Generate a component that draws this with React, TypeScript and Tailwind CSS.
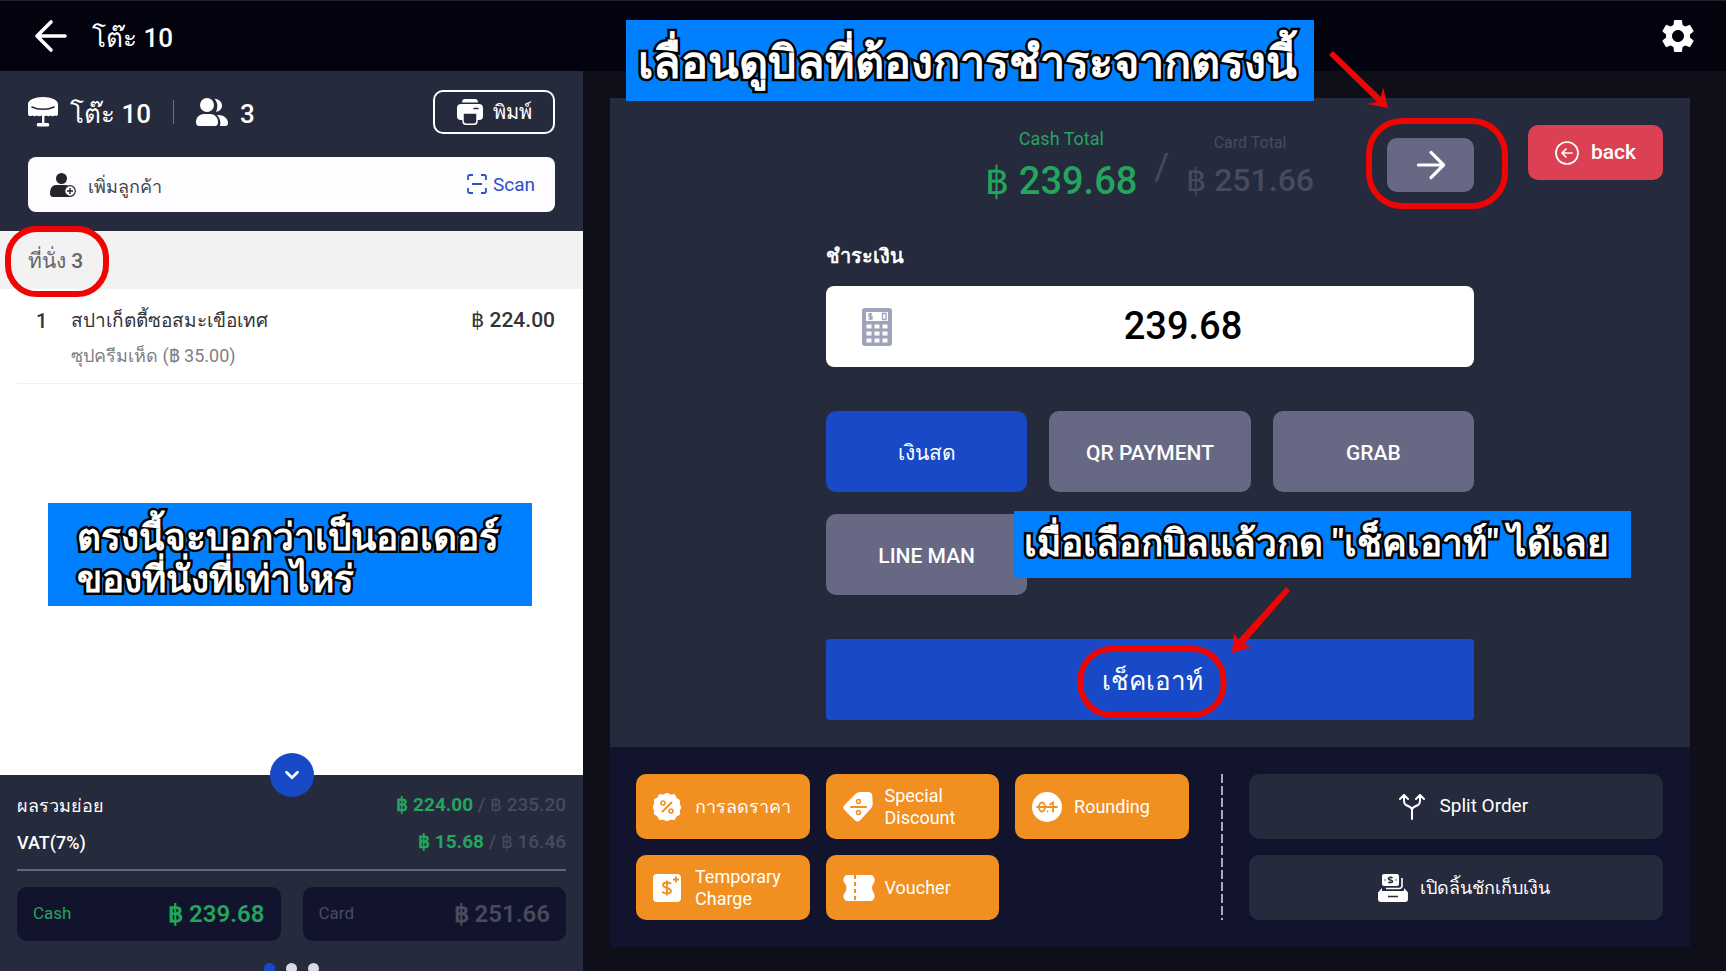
import type { ReactNode } from 'react'
import { ChevronDown } from 'lucide-react'
import { MdSettings } from 'react-icons/md'

const methods = ['เงินสด', 'QR PAYMENT', 'GRAB', 'LINE MAN']

function ArrowIcon({ className = '' }: { className?: string }) {
  return (
    <svg viewBox="0 0 34 34" className={`w-[34px] h-[34px] ${className}`} fill="none" stroke="#fff" strokeWidth="3.600" strokeLinecap="round" strokeLinejoin="round" aria-hidden="true">
      <path d="M31 17H3M17 3L3 17l14 14" />
    </svg>
  )
}

function TableIcon() {
  return (
    <svg viewBox="0 0 30 30" className="w-[30px] h-[30px]" aria-hidden="true">
      <path d="M0 7C0 3 7 0 15 0s15 3 15 7v10c0 1.500-1.600 2.500-3 1.500-1.500 1-3 1.200-4.200 0-1.500 1-3.200 1-4.400 0-1.400 1-3.400 1-4.800 0-1.400 1-3.400 1-4.800 0-1.200 1-3 1-4.400 0C1.800 20 0 18.500 0 17z" fill="#fff" />
      <path d="M4 10c6 3 16 3 22 0" fill="none" stroke="#262a3d" strokeWidth="1.600" strokeLinecap="round" />
      <path d="M14 18h2.400v8H20c1.400 0 1.800 3.500 0 3.500H10c-1.800 0-1.400-3.500 0-3.500h4z" fill="#fff" />
    </svg>
  )
}

function GuestsIcon() {
  return (
    <svg viewBox="0 0 32 28" className="w-8 h-7" fill="#fff" aria-hidden="true">
      <circle cx="11" cy="7" r="7" />
      <path d="M0 24c0-5 4-8 8-8h6c4.500 0 8 3.500 8 8 0 2.500-1 4-3 4H3c-2 0-3-1.500-3-4z" />
      <path d="M18.500.800C23 1.200 26 4 26 7.500s-2.500 6-6 6.300c2-4 2-9-1.500-13zM21 17c6-.500 11 3 11 8 0 2-1 3-2.500 3H24c1-4 0-8-3-11z" />
    </svg>
  )
}

function PrinterIcon() {
  return (
    <svg viewBox="0 0 26 26" className="w-[26px] h-[26px]" aria-hidden="true">
      <path d="M5 3.500C5 1.500 6 0 8 0h10c2 0 3 1.500 3 3.500z" fill="#fff" />
      <path d="M4 5h18c2.500 0 4 1.500 4 4v8c0 2.500-1 4-4 4H4c-3 0-4-1.500-4-4V9c0-2.500 1.500-4 4-4z" fill="#fff" />
      <path d="M6 14h14v8c0 2-1 3.200-3 3.200H9c-2 0-3-1.200-3-3.200z" fill="#262a3d" stroke="#fff" strokeWidth="1.500" />
      <path d="M17 9.500h4" stroke="#262a3d" strokeWidth="1.500" strokeLinecap="round" />
    </svg>
  )
}

function AddCustomerIcon() {
  return (
    <svg viewBox="0 0 26 24" className="w-[26px] h-6" aria-hidden="true">
      <circle cx="11.500" cy="5.500" r="5.500" fill="#24242c" />
      <path d="M0 20c0-5 2.500-8 6-8h9c3 0 5 2 5 6v6H3c-2 0-3-1.500-3-4z" fill="#24242c" />
      <circle cx="20" cy="18" r="5.300" fill="#fff" stroke="#24242c" strokeWidth="1.200" />
      <path d="M20 15v6M17 18h6" stroke="#24242c" strokeWidth="1.400" />
    </svg>
  )
}

function ScanIcon() {
  return (
    <svg viewBox="0 0 20 20" className="w-5 h-5" fill="none" stroke="#2c50c8" strokeWidth="1.800" aria-hidden="true">
      <path d="M1 6V3q0-2 2-2h3M14 1h3q2 0 2 2v3M19 14v3q0 2-2 2h-3M6 19H3q-2 0-2-2v-3M5 10h10" />
    </svg>
  )
}

function CalculatorIcon() {
  return (
    <svg viewBox="0 0 30 38" className="w-[30px] h-[38px]" aria-hidden="true">
      <rect width="30" height="38" rx="3" fill="#a0a1ba" />
      <path d="M4 4h22v9H4zM4.500 16.500h5v4h-5zM12.500 16.500h5v4h-5zM20.500 16.500h5v4h-5zM4.500 23.500h5v4h-5zM12.500 23.500h5v4h-5zM20.500 23.500h5v4h-5zM4.500 30.500h5v4h-5zM12.500 30.500h5v4h-5zM20.500 30.500h5v4h-5z" fill="#fff" />
      <path d="M10 6H7v2.500h3V11H6.500M8.500 5v7M20.500 5.500h3.500v6h-3.500z" fill="none" stroke="#a0a1ba" strokeWidth="1.300" />
    </svg>
  )
}

function BackIcon() {
  return (
    <svg viewBox="0 0 24 24" className="w-6 h-6" fill="none" stroke="#fff" strokeWidth="1.700" strokeLinecap="round" strokeLinejoin="round" aria-hidden="true">
      <circle cx="12" cy="12" r="11" />
      <path d="M17 12H7M11 8l-4 4 4 4" />
    </svg>
  )
}

function PercentIcon() {
  return (
    <svg viewBox="0 0 28 28" className="w-7 h-7" aria-hidden="true">
      <path d="M14 0l3.500 2 4-.300 1.800 3.500 3.400 2.200-.300 4L28 14l-1.600 3.500.300 4-3.400 1.500-1.800 3.500-4-.300L14 28l-3.500-1.800-4 .300L4.700 23l-3.400-2 .300-3.500L0 14l1.600-3.500-.300-4 3.400-1.500 1.800-3.300 4 .300z" fill="#fff" stroke="#fff" strokeLinejoin="round" />
      <path d="M9.500 18.500l9-9" stroke="#f19020" strokeWidth="2" strokeLinecap="round" />
      <circle cx="10" cy="10" r="2" fill="none" stroke="#f19020" strokeWidth="1.600" />
      <circle cx="18" cy="18" r="2" fill="none" stroke="#f19020" strokeWidth="1.600" />
    </svg>
  )
}

function TagIcon() {
  return (
    <svg viewBox="0 0 30 30" className="w-[30px] h-[30px]" aria-hidden="true">
      <path d="M13 1.500Q14.500 0 17 0h8q4 0 4.300 4l.400 8q0 2.500-1.500 4.200L17 28.500q-2.500 2-5 0L1.500 18q-2.500-2.500 0-5z" fill="#fff" />
      <path d="M8 15h15" stroke="#f19020" strokeWidth="2" strokeLinecap="round" />
      <circle cx="15.500" cy="9.500" r="2" fill="none" stroke="#f19020" strokeWidth="1.500" />
      <circle cx="15.500" cy="20.500" r="2" fill="none" stroke="#f19020" strokeWidth="1.500" />
    </svg>
  )
}

function RoundingIcon() {
  return (
    <svg viewBox="0 0 30 30" className="w-[30px] h-[30px]" aria-hidden="true">
      <circle cx="15" cy="15" r="15" fill="#fff" />
      <g fill="none" stroke="#f19020" strokeWidth="1.800" strokeLinecap="round">
        <ellipse cx="10" cy="15" rx="3" ry="4.500" />
        <path d="M5 15h20M18 12.500l3-2v9M15.500 19.300h.100" />
      </g>
    </svg>
  )
}

function ChargeIcon() {
  return (
    <svg viewBox="0 0 28 28" className="w-7 h-7" aria-hidden="true">
      <rect width="28" height="28" rx="4" fill="#fff" />
      <path d="M18 10c-1-2-8-2.500-8 1s8 2.500 8 6-7.500 3-8.500.500M14 6.500v15M23 2.500v6M20 5.500h6" fill="none" stroke="#f19020" strokeWidth="1.900" />
    </svg>
  )
}

function VoucherIcon() {
  return (
    <svg viewBox="0 0 32 26" className="w-8 h-[26px]" aria-hidden="true">
      <path d="M5 0h22q4 0 4.500 4 .5 3-1 4.500-3 4.500 0 9 1.500 1.500 1 4.500-.500 4-4.500 4H5q-4 0-4.500-4-.5-3 1.500-4.500 3-4.500 0-9Q0 7 .5 4 1 0 5 0z" fill="#fff" />
      <path d="M12 0v26" stroke="#f19020" strokeWidth="2" strokeDasharray="4 3" />
    </svg>
  )
}

function SplitIcon() {
  return (
    <svg viewBox="0 0 26 26" className="w-[26px] h-[26px]" fill="none" stroke="#fff" strokeWidth="2" strokeLinecap="round" strokeLinejoin="round" aria-hidden="true">
      <path d="M13 25v-9q0-2-2-3L7 11q-2-1-2-4V2M1 5l4-4 4 4M13 16q0-2 2-3l4-2q2-1 2-4V2M17 5l4-4 4 4" />
    </svg>
  )
}

function DrawerIcon() {
  return (
    <svg viewBox="0 0 30 28" className="w-[30px] h-7" aria-hidden="true">
      <path d="M4 14L0 18.500V25q0 3 3 3h24q3 0 3-3v-6.500L26 14v3H4z" fill="#fff" />
      <rect x="4" width="17" height="12" rx="2" fill="#fff" />
      <path d="M8 14.500h13q3 0 3-3V4" fill="none" stroke="#fff" strokeWidth="1.600" />
      <path d="M14.500 4c-1-1-4-.800-4 .700s4 1 4 2.600-3 1.500-4 .500M6.500 6h1M17.500 6h1M10 22.500h10" fill="none" stroke="#262a3d" strokeWidth="1.700" />
    </svg>
  )
}

// Blue instruction banner, placed by its caller
function Callout({ className, children }: { className: string; children: ReactNode }) {
  return (
    <p className={`absolute z-10 bg-[#0080ff] font-bold text-white [-webkit-text-stroke:5px_#000] [paint-order:stroke_fill] ${className}`}>
      {children}
    </p>
  )
}

function Ring({ className }: { className: string }) {
  return <span className={`absolute border-[#f00505] pointer-events-none ${className}`} aria-hidden="true" />
}

const extras = [
  { label: 'การลดราคา', icon: <PercentIcon /> },
  { label: 'Special Discount', icon: <TagIcon /> },
  { label: 'Rounding', icon: <RoundingIcon /> },
  { label: 'Temporary Charge', icon: <ChargeIcon /> },
  { label: 'Voucher', icon: <VoucherIcon /> },
]

const subtotals = [
  { label: 'ผลรวมย่อย', cash: '฿ 224.00', card: '฿ 235.20' },
  { label: 'VAT(7%)', cash: '฿ 15.68', card: '฿ 16.46' },
]

function OrderPanel() {
  return (
    <aside className="relative w-[583px] shrink-0 flex flex-col bg-[#262a3d]">
      <div className="px-7 pt-[18px] pb-[19px]">
        <div className="flex items-center">
          <TableIcon />
          <h2 className="ml-3 pt-1 text-[26px] leading-[42px] font-medium">โต๊ะ 10</h2>
          <span className="ml-[22px] w-px h-6 bg-[#6b6e85]" />
          <span className="ml-[22px] flex items-center gap-3 text-[26px] leading-[46px] font-medium">
            <GuestsIcon />
            <span className="pt-1 leading-[42px]">3</span>
          </span>
          <button type="button" className="ml-auto w-[122px] h-11 flex items-center justify-center gap-[10px] rounded-[10px] border-2 border-white text-xl">
            <PrinterIcon />
            พิมพ์
          </button>
        </div>
        <div className="mt-[22px] h-[55px] flex items-center rounded-lg bg-[#fdfdff] pl-[22px] pr-5 text-lg">
          <AddCustomerIcon />
          <input aria-label="เพิ่มลูกค้า" placeholder="เพิ่มลูกค้า" className="ml-3 pt-1 flex-1 min-w-0 outline-none placeholder:text-[#44444c]" />
          <button type="button" className="flex items-center gap-[6px] text-[19px] text-[#2c50c8]">
            <ScanIcon />
            Scan
          </button>
        </div>
      </div>

      <div className="flex-1 bg-white">
        <h3 className="relative h-[58px] flex items-center bg-[#f2f2f2] px-7 pt-1 text-[21px] font-medium text-[#66666a]">
          ที่นั่ง 3
          <Ring className="left-[5px] -top-[5px] w-[104px] h-[71px] rounded-[32px] border-[6px]" />
        </h3>
        <div className="ml-[17px] border-b border-[#eceff4] pt-4 pb-3 pr-7 text-[19px] text-[#333338]">
          <div className="flex h-8 items-center">
            <span className="w-[54px] pl-[19px] text-xl font-medium">1</span>
            <span className="flex-1">สปาเก็ตตี้ซอสมะเขือเทศ</span>
            <span className="font-medium text-[21px]">฿ 224.00</span>
          </div>
          <p className="mt-1 ml-[54px] text-lg leading-[30px] text-[#808085]">ซุปครีมเห็ด (฿ 35.00)</p>
        </div>
      </div>

      <div className="relative px-[17px] pt-3">
        <button type="button" aria-label="Collapse totals" className="absolute left-1/2 -top-[22px] -ml-[22px] w-11 h-11 flex items-center justify-center rounded-full bg-[#184ac8]">
          <ChevronDown size={22} strokeWidth={3} />
        </button>
        {subtotals.map((row) => (
          <div key={row.label} className="flex justify-between h-[37px] items-center text-[19px] font-medium">
            <span className="text-lg font-medium">{row.label}</span>
            <span className="text-[#484b5e]">
              <span className="text-[#23a55e] font-bold">{row.cash}</span> / {row.card}
            </span>
          </div>
        ))}
        <div className="mt-2 h-0.5 bg-[#62657c]" />
        <div className="mt-4 grid grid-cols-2 gap-[22px]">
          <div className="h-[54px] flex items-center justify-between rounded-[10px] bg-[#12132c] px-4 text-[#23a55e]">
            <span className="text-[17px]">Cash</span>
            <span className="text-2xl font-semibold">฿ 239.68</span>
          </div>
          <div className="h-[54px] flex items-center justify-between rounded-[10px] bg-[#12132c] px-4 text-[#484b5e]">
            <span className="text-[17px]">Card</span>
            <span className="text-2xl font-semibold">฿ 251.66</span>
          </div>
        </div>
        <div className="mt-[22px] h-2 flex justify-center gap-[11px] overflow-hidden">
          <span className="w-[11px] h-[11px] rounded-full bg-[#184ac8]" />
          <span className="w-[11px] h-[11px] rounded-full bg-[#d9dae3]" />
          <span className="w-[11px] h-[11px] rounded-full bg-[#d9dae3]" />
        </div>
      </div>

      <Callout className="left-12 top-[432px] w-[484px] h-[103px] pl-[29px] pt-[14px] text-[37px] leading-[42px]">
        ตรงนี้จะบอกว่าเป็นออเดอร์
        <br />
        ของที่นั่งที่เท่าไหร่
      </Callout>
    </aside>
  )
}

function Totals() {
  return (
    <div className="flex items-start justify-end pr-[27px] pt-[27px]">
      <div className="flex pr-[73px] font-medium">
        <div className="text-center text-[#23a55e]">
          <p className="text-lg leading-7 font-normal">Cash Total</p>
          <p className="text-[38px] leading-[56px]">฿ 239.68</p>
        </div>
        <span className="mx-[17px] mt-[22px] text-4xl font-normal text-[#484b5e]">/</span>
        <div className="text-center text-[#484b5e]">
          <p className="mt-1 text-base leading-7 font-normal">Card Total</p>
          <p className="text-[32px] leading-[46px]">฿ 251.66</p>
        </div>
      </div>
      <div className="relative mt-[13px]">
        <button type="button" aria-label="Next bill" className="w-[87px] h-[54px] flex items-center justify-center rounded-[10px] bg-[#666884]">
          <ArrowIcon className="rotate-180 scale-90" />
        </button>
        <Ring className="-left-[21px] -top-5 w-[142px] h-[91px] rounded-[36px] border-[6px]" />
        <svg viewBox="0 0 64 60" className="absolute -left-[59px] -top-[88px] w-16 h-[60px]" aria-hidden="true">
          <path d="M5 1l48 46 2-10 5 21-21-4 10-2L1 5z" fill="#f00505" />
        </svg>
      </div>
      <button type="button" className="ml-[54px] w-[135px] h-[55px] flex items-center justify-center gap-3 rounded-[10px] bg-[#dc4153] text-[21px] font-medium">
        <BackIcon />
        back
      </button>
    </div>
  )
}

function PaymentCard() {
  return (
    <main className="relative flex-1 min-w-0 ml-[27px] mr-9 mt-[27px] mb-6 flex flex-col">
      <section className="flex-1 bg-[#262a3d]">
        <Totals />
        <div className="relative w-3/5 mx-auto mt-[29px]">
          <label htmlFor="amount" className="block text-xl leading-9 font-bold">
            ชำระเงิน
          </label>
          <div className="mt-3 h-[81px] flex items-center rounded-lg bg-white pl-9">
            <CalculatorIcon />
            <input id="amount" defaultValue="239.68" className="flex-1 min-w-0 text-center text-[38px] font-medium text-black outline-none" />
          </div>
          <div className="mt-11 grid grid-cols-3 gap-[22px]">
            {methods.map((method, i) => (
              <button key={method} type="button" className={`h-[81px] rounded-[10px] pt-1 text-[21px] font-medium ${i === 0 ? 'bg-[#184ac8]' : 'bg-[#666884]'}`}>
                {method}
              </button>
            ))}
          </div>
          <button type="button" className="mt-11 w-full h-[81px] rounded-[4px] bg-[#184ac8] pl-1 pt-1 text-[26px]">
            <span className="relative inline-block">
              เช็คเอาท์
              <Ring className="left-1/2 top-1/2 -translate-x-1/2 -translate-y-1/2 w-[149px] h-[72px] rounded-[34px] border-[6px]" />
            </span>
          </button>
          <Callout className="left-[188px] top-[273px] w-[617px] h-[67px] pl-[10px] text-[37px] leading-[66px] whitespace-nowrap">
            เมื่อเลือกบิลแล้วกด "เช็คเอาท์" ได้เลย
          </Callout>
          <svg viewBox="0 0 60 68" className="absolute left-[405px] top-[349px] w-[60px] h-[68px]" aria-hidden="true">
            <path d="M55 0l4 4-46 53 8 3L1 66l2-20 4 7z" fill="#f00505" />
          </svg>
        </div>
      </section>

      <footer className="flex bg-[#12132c] py-[27px] pl-[26px] pr-[27px]">
        <div className="flex-4 grid grid-cols-3 gap-4">
          {extras.map(({ label, icon }) => (
            <button key={label} type="button" className="h-[65px] flex items-center rounded-[10px] bg-[#f19020] pl-[17px] text-left text-lg leading-[22px]">
              <span className="w-[42px] shrink-0">{icon}</span>
              {label}
            </button>
          ))}
        </div>
        <div className="ml-8 mr-[26px] w-0.5 bg-[repeating-linear-gradient(to_bottom,#a9aabb_0_9px,transparent_9px_12px)]" />
        <div className="flex-3 flex flex-col gap-4">
          <button type="button" className="h-[65px] flex items-center justify-center gap-[14px] rounded-[10px] bg-[#262a3d] pl-4 text-[19px]">
            <SplitIcon />
            Split Order
          </button>
          <button type="button" className="h-[65px] flex items-center justify-center gap-3 rounded-[10px] bg-[#262a3d] pl-4 text-lg">
            <DrawerIcon />
            เปิดลิ้นชักเก็บเงิน
          </button>
        </div>
      </footer>

      <Callout className="left-4 -top-[78px] w-[688px] h-[81px] pl-3 pt-1 text-[45px] leading-[78px] whitespace-nowrap">
        เลื่อนดูบิลที่ต้องการชำระจากตรงนี้
      </Callout>
    </main>
  )
}

export default function App() {
  return (
    <div className="min-h-screen flex flex-col bg-[#0f0f1a] text-white font-['Roboto','Noto_Sans',sans-serif]">
      <header className="h-[71px] flex items-center bg-[#03030f] border-t border-[#20212b] pl-[34px] pr-7">
        <button type="button" aria-label="Back">
          <ArrowIcon />
        </button>
        <h1 className="ml-6 pt-1 text-[26px] font-medium">โต๊ะ 10</h1>
        <button type="button" aria-label="Settings" className="ml-auto">
          <MdSettings size={40} />
        </button>
      </header>
      <div className="flex-1 flex">
        <OrderPanel />
        <PaymentCard />
      </div>
    </div>
  )
}
